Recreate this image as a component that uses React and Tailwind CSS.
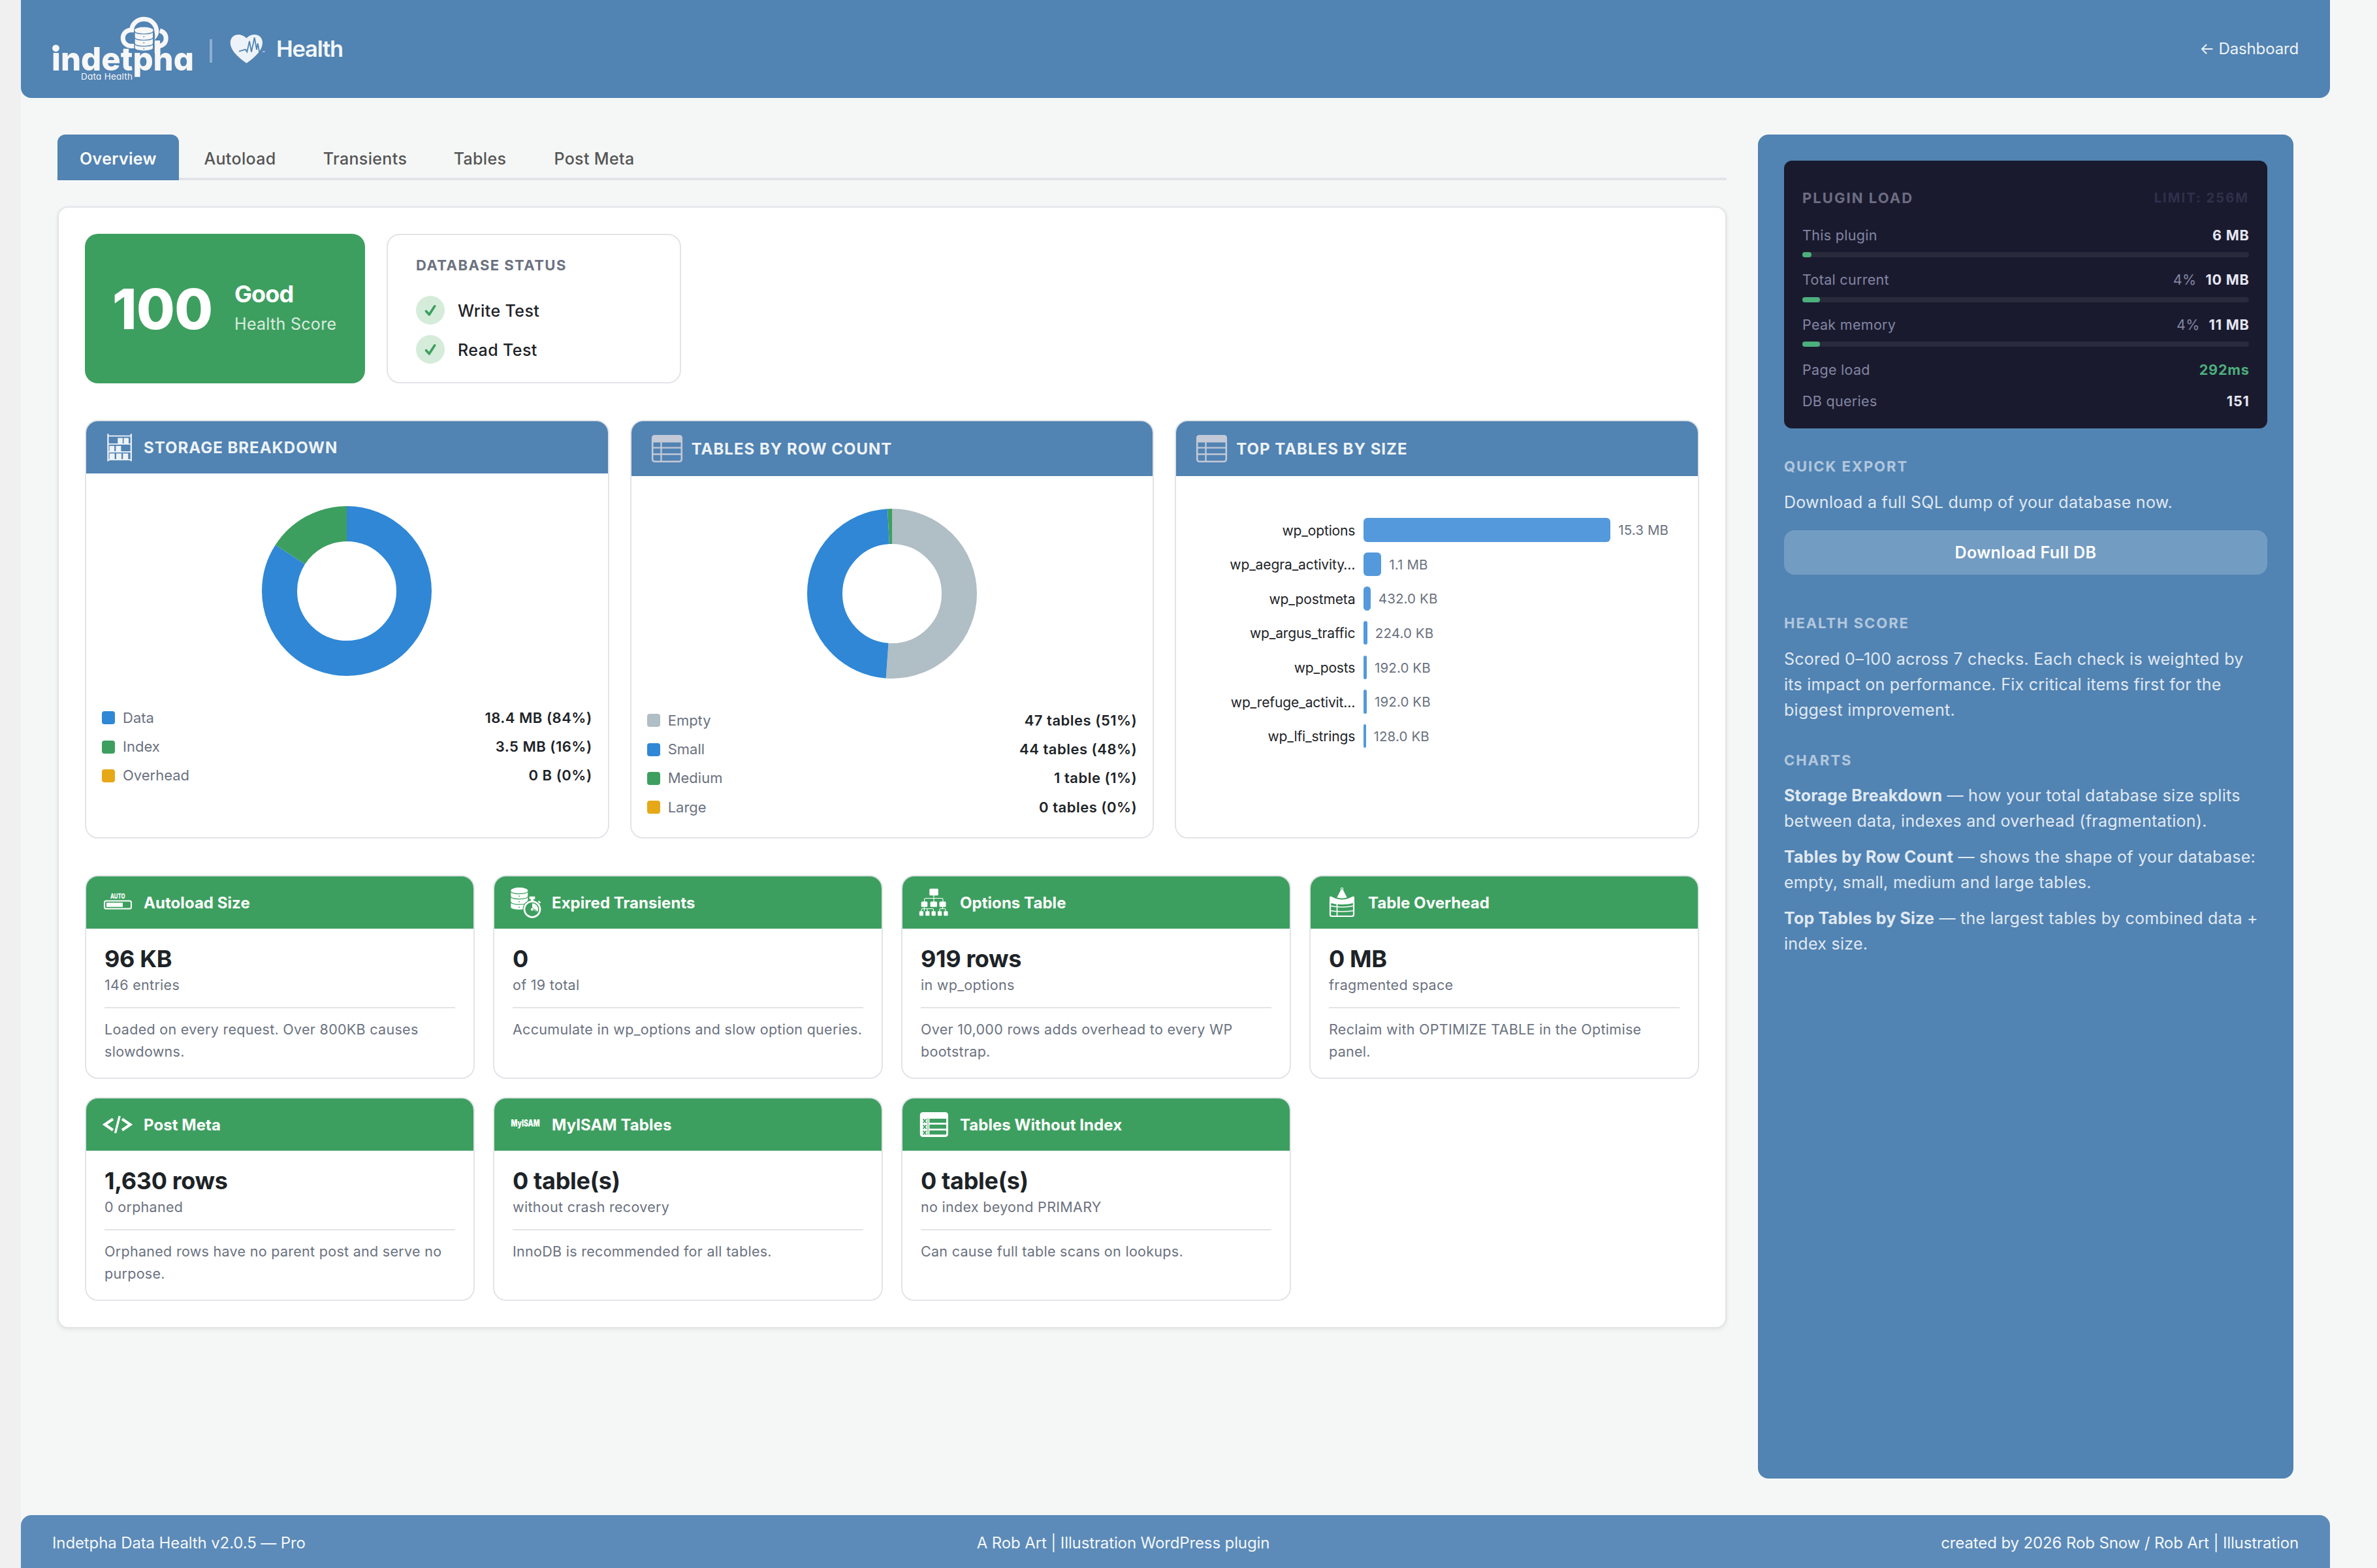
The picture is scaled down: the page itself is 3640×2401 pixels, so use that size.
const tabs = [
  { label: "Overview", width: "w-[186px]", active: true },
  { label: "Autoload", width: "w-[179px]" },
  { label: "Transients", width: "w-[196px]" },
  { label: "Tables", width: "w-[148px]" },
  { label: "Post Meta", width: "w-[194px]" },
];

function Logo() {
  return (
    <svg className="block w-[224px] h-[110px]" viewBox="76 20 224 110" fill="none">
      <path d="M208 70.500H200.500a12.300 12.300 0 0 1 0-24.600h1.200C202 36.500 210 29.300 220.500 29.300C231.500 29.300 239.500 37.500 239.800 47.500" stroke="#f7f7f7" strokeWidth="7" />
      <path d="M243.300 46c.4 5.500-1.500 10.500-6.800 15.500c1.200-5 .9-10-.3-14z" fill="#f7f7f7" />
      <path d="M244.800 46.800C250.500 48.600 254.200 53 254.200 59c0 6.800-5.200 11.600-11.500 11.600H238" stroke="#f7f7f7" strokeWidth="7" />
      <rect x="236.800" y="62" width="8.300" height="20" fill="#f7f7f7" />
      <path d="M206 46v27.500c0 6.300 28.700 6.300 28.700 0V46z" fill="#f7f7f7" stroke="#5183b3" strokeWidth="1.400" />
      <ellipse cx="220.350" cy="46.200" rx="14.300" ry="4.600" fill="#f7f7f7" />
      <g stroke="#5183b3" strokeWidth="1.200">
        <path d="M206 47.500c0 6 28.700 6 28.700 0M206 57c0 6 28.700 6 28.700 0M206 66.300c0 6 28.700 6 28.700 0" />
      </g>
      <g fill="#5183b3">
        <circle cx="220.300" cy="56.300" r="0.900" />
        <circle cx="220.300" cy="65.500" r="0.900" />
        <circle cx="220.300" cy="74.800" r="0.900" />
      </g>
      <text x="79" y="107.700" textLength="218" fill="#f7f7f7" className="font-['Inter'] text-[49px] font-extrabold [font-feature-settings:'cv11']">indetpha</text>
      <circle cx="85.500" cy="73.800" r="5.400" fill="#f7f7f7" />
      <text x="124" y="121.500" textLength="79" fill="#f7f7f7" className="font-['Inter'] text-[13.500px] font-normal [font-feature-settings:'cv11']">Data Health</text>
    </svg>
  );
}

function HeartPulse() {
  return (
    <svg className="block w-[56px] h-[48px]" viewBox="350 52 56 48" fill="none">
      <path d="M376.500 97.700C362 88 351.700 77 351.700 66.500C351.700 58.500 357.500 54 364 54C369 54 374 56.500 376.500 59.500C379 56.500 383 54 389 54C396 54 401 59 401 66.500C401 77 391 88 376.500 97.700z" fill="#edf3f8" />
      <path d="M398 80h6.700" stroke="#b9cde1" strokeWidth="1.600" />
      <path d="M365 79.700l6.700-2 3.300-.8 2.300 3.600L381 64l3 16.500L388.700 58.500 392 77l1.700-9.500L396 80h5" stroke="#5183b3" strokeWidth="1.800" strokeLinejoin="miter" />
    </svg>
  );
}

function RackIcon() {
  return (
    <svg className="block w-[48px] h-[48px]" viewBox="0 0 48 48">
      <g fill="#eef3f8">
        <rect x="4.300" y="3" width="2.200" height="42.500" rx="1" />
        <rect x="39.700" y="3" width="2.200" height="42.500" rx="1" />
        <rect x="5" y="5.700" width="36" height="1.800" />
        <rect x="5" y="18" width="36" height="1.800" />
        <rect x="5" y="30" width="36" height="1.800" />
        <rect x="5" y="42" width="36" height="1.800" />
        <rect x="20.300" y="9.600" width="7.500" height="8.600" />
        <rect x="29.500" y="9.600" width="7.500" height="8.600" />
        <rect x="7.600" y="21.800" width="7.500" height="8.600" />
        <rect x="17.400" y="21.800" width="8" height="8.600" />
        <rect x="7.600" y="33.400" width="8" height="8.800" />
        <rect x="18" y="33.400" width="8" height="8.800" />
        <rect x="28.300" y="33.400" width="8" height="8.800" />
      </g>
    </svg>
  );
}

function TableIcon() {
  return (
    <svg className="block w-[52px] h-[48px]" viewBox="0 0 52 48" fill="none" stroke="#c3c9d6">
      <rect x="4.200" y="4.200" width="44.600" height="39.600" rx="3.500" strokeWidth="2.600" />
      <path d="M3.500 14.500V7a3.500 3.500 0 0 1 3.500-3.500h39A3.500 3.500 0 0 1 49.500 7v7.500z" fill="#c3c9d6" stroke="none" />
      <path d="M4 22.700h45M4 32.500h45M17.500 14v30" strokeWidth="2.300" />
    </svg>
  );
}

const cardIcon = "block w-[48px] h-[48px] shrink-0";

function AutoIcon() {
  return (
    <svg className={cardIcon} viewBox="0 0 48 48" fill="none">
      <text x="13" y="18.400" textLength="22.500" lengthAdjust="spacingAndGlyphs" fill="#fff" className="font-['Inter'] text-[10.500px] font-extrabold">AUTO</text>
      <rect x="4" y="21.500" width="41" height="12" rx="2.500" stroke="#fff" strokeWidth="2" />
      <rect x="7" y="24.300" width="25" height="6.400" fill="#fff" />
    </svg>
  );
}

function ExpiredIcon() {
  return (
    <svg className={cardIcon} viewBox="0 0 48 48" fill="none">
      <path d="M1.300 6v25c0 5 26 5 26 0V6z" fill="#fff" />
      <ellipse cx="14.300" cy="5.600" rx="13" ry="4.500" fill="#fff" />
      <g stroke="#3d9f5f" strokeWidth="1.100">
        <path d="M1.300 6.700c0 5.200 26 5.200 26 0M1.300 14.700c0 5.200 26 5.200 26 0M1.300 23c0 5.200 26 5.200 26 0" />
      </g>
      <g fill="#3d9f5f">
        <circle cx="14" cy="14.200" r="0.900" />
        <circle cx="14" cy="22.700" r="0.900" />
        <circle cx="14" cy="31.200" r="0.900" />
      </g>
      <circle cx="34" cy="34.300" r="14.500" fill="#3d9f5f" />
      <path d="M28.500 14h11v7.500h-11z" fill="#3d9f5f" />
      <circle cx="34" cy="34.300" r="12" stroke="#fff" strokeWidth="2.700" />
      <path d="M29.700 14.800h8.600v4H36v3h-4v-3h-2.300z" fill="#fff" />
      <path d="M43.500 21.800l3 3" stroke="#fff" strokeWidth="2.200" />
      <path d="M34 34.300V25.300a9 9 0 0 1 7.800 13.500z" fill="#fff" />
      <path d="M34 32.500l8 5.500" stroke="#3d9f5f" strokeWidth="1.100" />
      <circle cx="33.800" cy="34.500" r="2" fill="#fff" />
    </svg>
  );
}

function TreeIcon() {
  return (
    <svg className={cardIcon} viewBox="0 0 48 48" fill="none">
      <path d="M24 13v10M9.600 23v-3.500q0-2 2-2h24.400q2 0 2 2V23M9.400 30v7M5 37.500v-2.500q0-1.500 1.500-1.500h15.500q1.500 0 1.500 1.500v2.500M14 33.500v4M37.500 30v3.500M33 37.500v-2.500q0-1.500 1.500-1.500h6q1.500 0 1.500 1.500v2.500" stroke="#fff" strokeWidth="1.100" />
      <g fill="#fff">
        <rect x="17.300" y="2.700" width="13.500" height="10.500" rx="1.500" />
        <rect x="4.700" y="22.500" width="9.600" height="8.300" rx="1.500" />
        <rect x="18.600" y="22.500" width="10.400" height="8.300" rx="1.500" />
        <rect x="32.500" y="22.500" width="10" height="8.300" rx="1.500" />
        <rect x="1.800" y="37.300" width="6.200" height="7" rx="1.300" />
        <rect x="11.200" y="37.300" width="6.200" height="7" rx="1.300" />
        <rect x="20.600" y="37.300" width="6.200" height="7" rx="1.300" />
        <rect x="30" y="37.300" width="6.200" height="7" rx="1.300" />
        <rect x="39.300" y="37.300" width="6.200" height="7" rx="1.300" />
      </g>
    </svg>
  );
}

function OverheadIcon() {
  return (
    <svg className={cardIcon} viewBox="0 0 48 48" fill="none">
      <circle cx="24" cy="3.200" r="1.700" stroke="#fff" strokeWidth="1.100" />
      <path d="M22.300 4.800h3.400l6 11.500q-7.700 2.600-15.400 0z" fill="#fff" />
      <path d="M5 16.500q0-2.500 2.500-1.700l6 2.700q10.500 4 21 0l6-2.700q2.500-.8 2.500 1.700v8q-19 5-38 0z" fill="#fff" />
      <path d="M6 22v20.500q0 2.500 2.500 2.500h31q2.500 0 2.500-2.500V22" stroke="#fff" strokeWidth="2.200" />
      <path d="M6 29q18 4 36 0M6 36.500q18 2.500 36 0M16.500 24v21" stroke="#fff" strokeWidth="1.700" />
    </svg>
  );
}

function CodeIcon() {
  return (
    <svg className={cardIcon} viewBox="0 0 48 48" fill="none" stroke="#fff" strokeWidth="4.200">
      <path d="M17 15.500L4.500 24L17 32.500M31 15.500L43.500 24L31 32.500" />
      <path d="M27.200 10.800L20.500 37.200" strokeWidth="3.400" />
    </svg>
  );
}

function MyIsamIcon() {
  return (
    <svg className={cardIcon} viewBox="0 0 48 48">
      <text x="1.500" y="26.500" textLength="44" lengthAdjust="spacingAndGlyphs" fill="#fff" className="font-['Inter'] text-[14px] font-black">MyISAM</text>
    </svg>
  );
}

function NoIndexIcon() {
  return (
    <svg className={cardIcon} viewBox="0 0 48 48" fill="none">
      <rect x="2.800" y="5" width="43.200" height="38" rx="4.500" fill="#fff" />
      <g fill="#3d9f5f">
        <rect x="17.300" y="15" width="25.700" height="6.300" />
        <rect x="17.300" y="24" width="25.700" height="6.300" />
        <rect x="17.300" y="33" width="25.700" height="6.300" />
        <rect x="14.500" y="14" width="1" height="26" />
      </g>
      <path d="M7.500 15.500l5 6m0-6l-5 6M7.500 24.500l5 6m0-6l-5 6M7.500 33.500l5 6m0-6l-5 6" stroke="#3d9f5f" strokeWidth="1.900" />
    </svg>
  );
}

function Donut({ slices }) {
  const r = 103;
  const c = 2 * Math.PI * r;
  let start = 0;
  return (
    <svg className="block w-[260px] h-[260px] mx-auto mt-[50px] -rotate-90" viewBox="0 0 260 260" fill="none">
      {slices.map((s) => {
        const offset = start;
        start += s.part;
        return (
          <circle key={s.color} cx="130" cy="130" r={r} stroke={s.color} strokeWidth="54" strokeDasharray={`${s.part * c} ${c}`} strokeDashoffset={-offset * c} />
        );
      })}
    </svg>
  );
}

function Legend({ rows }) {
  return (
    <div className="mt-[42px] px-[24px]">
      {rows.map((r) => (
        <div key={r.label} className="flex items-center h-[44.400px] text-[22px]">
          <span className={`size-[20px] rounded-[4px] ${r.swatch}`} />
          <span className="ml-[12px] text-[#6b7280]">{r.label}</span>
          <span className="ml-auto font-semibold text-[#1d2327] tracking-[0.500px]">{r.value}</span>
        </div>
      ))}
    </div>
  );
}

function ChartCard({ title, icon, tall, children }) {
  return (
    <section className="h-[641px] rounded-[20px] border-2 border-[#e2e4e8] bg-white overflow-hidden">
      <header className={`flex items-center gap-[12px] pl-[28px] bg-[#5183b3] ${tall ? "h-[84px]" : "h-[80px]"}`}>
        {icon}
        <h2 className="pt-px text-[24px] font-bold text-[#eef3f8] tracking-[1px]">{title}</h2>
      </header>
      {children}
    </section>
  );
}

const bars = [
  { name: "wp_options", size: "15.3 MB", width: 378 },
  { name: "wp_aegra_activity…", size: "1.1 MB", width: 27 },
  { name: "wp_postmeta", size: "432.0 KB", width: 10.5 },
  { name: "wp_argus_traffic", size: "224.0 KB", width: 5.5 },
  { name: "wp_posts", size: "192.0 KB", width: 4.7 },
  { name: "wp_refuge_activit…", size: "192.0 KB", width: 4.7 },
  { name: "wp_lfi_strings", size: "128.0 KB", width: 3.2 },
];

const checks = [
  { title: "Autoload Size", icon: <AutoIcon />, value: "96 KB", sub: "146 entries", note: "Loaded on every request. Over 800KB causes slowdowns." },
  { title: "Expired Transients", icon: <ExpiredIcon />, value: "0", sub: "of 19 total", note: "Accumulate in wp_options and slow option queries." },
  { title: "Options Table", icon: <TreeIcon />, value: "919 rows", sub: "in wp_options", note: "Over 10,000 rows adds overhead to every WP bootstrap." },
  { title: "Table Overhead", icon: <OverheadIcon />, value: "0 MB", sub: "fragmented space", note: "Reclaim with OPTIMIZE TABLE in the Optimise panel." },
  { title: "Post Meta", icon: <CodeIcon />, value: "1,630 rows", sub: "0 orphaned", note: "Orphaned rows have no parent post and serve no purpose." },
  { title: "MyISAM Tables", icon: <MyIsamIcon />, value: "0 table(s)", sub: "without crash recovery", note: "InnoDB is recommended for all tables." },
  { title: "Tables Without Index", icon: <NoIndexIcon />, value: "0 table(s)", sub: "no index beyond PRIMARY", note: "Can cause full table scans on lookups." },
];

function CheckCard({ title, icon, value, sub, note }) {
  return (
    <section className="h-[312px] rounded-[20px] border-2 border-[#e2e4e8] bg-white overflow-hidden">
      <header className="flex items-center h-[80px] gap-[16px] pl-[24px] bg-[#3d9f5f]">
        {icon}
        <h3 className="pt-[2px] text-[24px] font-bold text-white tracking-[0.050px]">{title}</h3>
      </header>
      <div className="px-[28px] pt-[24px]">
        <div className="text-[36px] leading-[44px] font-bold text-[#1d2327] tracking-[-0.350px]">{value}</div>
        <div className="text-[21.500px] leading-[36px] text-[#6b7280] tracking-[0.300px]">{sub}</div>
        <div className="mt-[16px] border-t-2 border-[#e2e4e8] pt-[16px] text-[21.500px] leading-[33.500px] text-[#6b7280] tracking-[0.290px]">{note}</div>
      </div>
    </section>
  );
}

function StatusRow({ label }) {
  return (
    <div className="flex items-center h-[44px] gap-[20px]">
      <svg className="block w-[44px] h-[44px]" viewBox="0 0 44 44" fill="none">
        <circle cx="22" cy="22" r="22" fill="#d5ecdb" />
        <path d="M15.500 23.500L20.300 28.800L28.700 15.800" stroke="#3d9f5f" strokeWidth="3.600" strokeLinecap="round" strokeLinejoin="round" />
      </svg>
      <span className="pt-[3px] text-[25px] font-medium text-[#1d2327] tracking-[0.400px]">{label}</span>
    </div>
  );
}

function Metric({ label, percent, value, good }) {
  return (
    <div className="flex items-center h-[36px] text-[21.500px]">
      <span className="text-[#8286a3] tracking-[0.300px]">{label}</span>
      <span className="ml-auto text-[#8286a3]">{percent}</span>
      <span className={`ml-[14px] font-bold tracking-[0.800px] -mr-[0.500px] ${good ? "text-[#4caf7d]" : "text-[#e6e6f2]"}`}>{value}</span>
    </div>
  );
}

function Meter({ fill }) {
  return (
    <div className="mt-[8px] mb-[16.700px] h-[8px] rounded-[4px] bg-[#2a2a3d]">
      <div className={`h-full rounded-[4px] bg-[#4caf7d] ${fill}`} />
    </div>
  );
}

function SideTitle({ children, className }) {
  return <h4 className={`text-[22px] leading-[30px] font-bold text-white/55 tracking-[1.950px] ${className}`}>{children}</h4>;
}

function Sidebar() {
  return (
    <aside className="w-[820px] h-[2058px] rounded-[16px] bg-[#5183b3] px-[40px] pt-[40px] text-[25px] leading-[39px] text-white/82 tracking-[0.270px]">
      <div className="h-[410px] rounded-[12px] bg-[#1a1a2e] px-[28px] pt-[40px]">
        <div className="flex items-center justify-between h-[34px] mb-[22px]">
          <span className="text-[22px] font-bold text-[#6c6e82] tracking-[2.050px]">PLUGIN LOAD</span>
          <span className="text-[20px] font-bold text-[#30304c] tracking-[2.100px]">LIMIT: 256M</span>
        </div>
        <Metric label="This plugin" value="6 MB" />
        <Meter fill="w-[14px]" />
        <Metric label="Total current" percent="4%" value="10 MB" />
        <Meter fill="w-[27px]" />
        <Metric label="Peak memory" percent="4%" value="11 MB" />
        <Meter fill="w-[27px]" />
        <Metric label="Page load" value="292ms" good />
        <div className="h-[12px]" />
        <Metric label="DB queries" value="151" />
      </div>
      <SideTitle className="mt-[43px]">QUICK EXPORT</SideTitle>
      <p className="mt-[21px]">Download a full SQL dump of your database now.</p>
      <button className="mt-[23px] flex w-full h-[68px] items-center justify-center rounded-[16px] bg-[#739cc2] pt-px text-[25px] font-semibold text-white tracking-[0.400px]">
        Download Full DB
      </button>
      <SideTitle className="mt-[59px]">HEALTH SCORE</SideTitle>
      <p className="mt-[21px]">
        Scored 0–100 across 7 checks. Each check is weighted by
        <br />
        its impact on performance. Fix critical items first for the
        <br />
        biggest improvement.
      </p>
      <SideTitle className="mt-[42px]">CHARTS</SideTitle>
      <p className="mt-[20px]">
        <b className="font-bold tracking-[0.200px]">Storage Breakdown</b> — how your total database size splits
        <br />
        between data, indexes and overhead (fragmentation).
      </p>
      <p className="mt-[16px]">
        <b className="font-bold tracking-[0.200px]">Tables by Row Count</b> — shows the shape of your database:
        <br />
        empty, small, medium and large tables.
      </p>
      <p className="mt-[16px]">
        <b className="font-bold tracking-[0.200px]">Top Tables by Size</b> — the largest tables by combined data +
        <br />
        index size.
      </p>
    </aside>
  );
}

export default function App() {
  return (
    <div className="flex w-[3640px] h-[2401px] overflow-hidden bg-[#f5f7f6] font-['Inter',sans-serif] whitespace-nowrap">
      <div className="w-[32px] shrink-0 bg-[#f0f0f1]" />
      <div className="flex flex-col w-[3536px]">
        <header className="flex items-center h-[150px] shrink-0 rounded-b-[16px] bg-[#5183b3] pl-[44px] pr-[48px]">
          <Logo />
          <div className="ml-[21px] mt-[6px] w-[4px] h-[36px] bg-[#8faed0]" />
          <div className="ml-[26px]">
            <HeartPulse />
          </div>
          <h1 className="ml-[16px] text-[34.500px] font-semibold text-[#f3f7fa] tracking-[-1.200px]">Health</h1>
          <a className="ml-auto text-[24px] text-white/90 tracking-[-0.150px]">← Dashboard</a>
        </header>

        <div className="flex gap-[48px] pl-[56px] mt-[56px]">
          <main className="w-[2556px]">
            <nav className="flex gap-[4px] h-[70px] border-b-4 border-[#e2e4e8] text-[25px] tracking-[0.350px]">
              {tabs.map((t) => (
                <a
                  key={t.label}
                  className={`flex items-center justify-center h-[70px] pt-[5px] ${t.width} ${
                    t.active ? "rounded-t-[12px] bg-[#5183b3] font-semibold text-white" : "font-medium text-[#555555]"
                  }`}
                >
                  {t.label}
                </a>
              ))}
            </nav>

            <div className="mt-[40px] rounded-[16px] border-2 border-[#e2e4e8] bg-white p-[40px] shadow-[0_2px_6px_rgba(0,0,0,0.08)]">
              <div className="flex gap-[33px]">
                <div className="flex items-center w-[429px] h-[229px] rounded-[20px] bg-[#3d9f5f] text-white">
                  <div className="ml-[42px] w-[187px] pt-[3px] text-[85px] leading-[84px] font-extrabold tracking-[-0.600px]">100</div>
                  <div>
                    <div className="text-[36px] leading-[46px] font-bold tracking-[-0.900px]">Good</div>
                    <div className="text-[25px] leading-[46px] text-white/80 tracking-[0.300px]">Health Score</div>
                  </div>
                </div>
                <div className="w-[451px] h-[229px] rounded-[20px] border-2 border-[#e2e4e8] pl-[43px] pt-[32px]">
                  <div className="mb-[33px] text-[22px] leading-[28px] font-bold text-[#6b7280] tracking-[1.450px]">DATABASE STATUS</div>
                  <StatusRow label="Write Test" />
                  <div className="h-[16px]" />
                  <StatusRow label="Read Test" />
                </div>
              </div>

              <div className="grid grid-cols-3 gap-[32px] mt-[56px]">
                <ChartCard title="STORAGE BREAKDOWN" icon={<RackIcon />}>
                  <Donut slices={[{ color: "#2f87d6", part: 0.84 }, { color: "#3d9f5f", part: 0.16 }]} />
                  <Legend
                    rows={[
                      { label: "Data", value: "18.4 MB (84%)", swatch: "bg-[#2f87d6]" },
                      { label: "Index", value: "3.5 MB (16%)", swatch: "bg-[#3d9f5f]" },
                      { label: "Overhead", value: "0 B (0%)", swatch: "bg-[#e6a817]" },
                    ]}
                  />
                </ChartCard>
                <ChartCard title="TABLES BY ROW COUNT" icon={<TableIcon />} tall>
                  <Donut slices={[{ color: "#b0bec5", part: 0.511 }, { color: "#2f87d6", part: 0.479 }, { color: "#3d9f5f", part: 0.0105 }]} />
                  <Legend
                    rows={[
                      { label: "Empty", value: "47 tables (51%)", swatch: "bg-[#b0bec5]" },
                      { label: "Small", value: "44 tables (48%)", swatch: "bg-[#2f87d6]" },
                      { label: "Medium", value: "1 table (1%)", swatch: "bg-[#3d9f5f]" },
                      { label: "Large", value: "0 tables (0%)", swatch: "bg-[#e6a817]" },
                    ]}
                  />
                </ChartCard>
                <ChartCard title="TOP TABLES BY SIZE" icon={<TableIcon />} tall>
                  <div className="pt-[56px]">
                    {bars.map((b) => (
                      <div key={b.name} className="flex items-center h-[52.650px]">
                        <span className="w-[274px] pt-[2px] text-right text-[21px] text-[#1d2327] tracking-[-0.120px]">{b.name}</span>
                        <span className="ml-[13px] h-[36.500px] rounded-[6px] bg-[#5499dc]" style={{ width: b.width }} />
                        <span className="ml-[12px] pt-[2px] text-[20.500px] text-[#6b7280] tracking-[0.120px]">{b.size}</span>
                      </div>
                    ))}
                  </div>
                </ChartCard>
              </div>

              <div className="grid grid-cols-4 gap-[28px] mt-[56px] whitespace-normal">
                {checks.map((c) => (
                  <CheckCard key={c.title} {...c} />
                ))}
              </div>
            </div>
          </main>
          <Sidebar />
        </div>

        <footer className="mt-auto flex items-center justify-between h-[81px] rounded-t-[16px] bg-[#5c8bb9] px-[48px] pt-[4px] text-[24px] text-white/95 tracking-[-0.120px]">
          <span>Indetpha Data Health v2.0.5 — Pro</span>
          <span>A Rob Art | Illustration WordPress plugin</span>
          <span>created by 2026 Rob Snow / Rob Art | Illustration</span>
        </footer>
      </div>
    </div>
  );
}
